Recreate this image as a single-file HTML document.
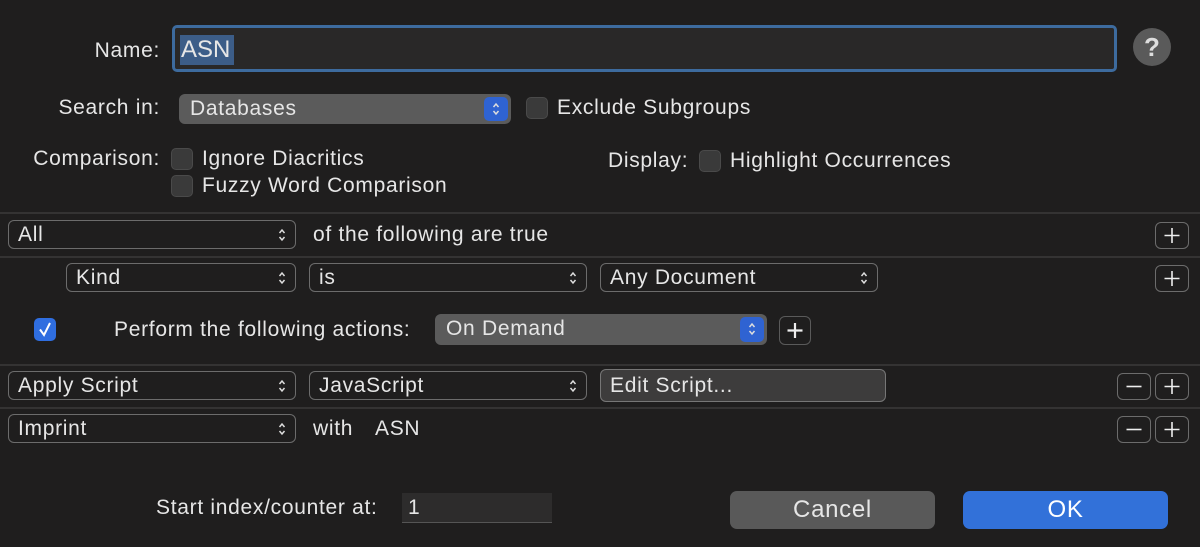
<!DOCTYPE html>
<html><head><meta charset="utf-8"><style>
body{margin:0;width:1200px;height:547px;background:#1f1e1e;font-family:"Liberation Sans",sans-serif;color:#e6e6e6;font-size:21px;letter-spacing:0.7px;overflow:hidden;position:relative}
.a{position:absolute}
.t{position:absolute;line-height:24px;white-space:nowrap}
.r{text-align:right}
.sep{position:absolute;left:0;width:1200px;height:2px;background:#343333}
.pop{position:absolute;box-sizing:border-box;border:1.5px solid #6c6c6c;border-radius:6px}
.pop span{position:absolute;left:9px;top:2px;line-height:24px}
.arr{position:absolute;right:9px;top:6px;width:8px;height:16px}
.sp{position:absolute;box-sizing:border-box;background:#5b5b5b;border-radius:6px}
.sp span{position:absolute;left:11px;top:3px;line-height:24px}
.st{position:absolute;right:3px;top:3px;width:24px;background:#2f63d2;border-radius:5px}
.cb{position:absolute;width:22px;height:22px;box-sizing:border-box;background:#3a3a3a;border:1px solid #4a4a4a;border-radius:5px}
.btn{position:absolute;box-sizing:border-box;border:1.5px solid #6c6c6c;border-radius:6px;width:34px;height:27px}
</style></head><body>
<svg width="0" height="0" style="position:absolute"><defs>
<symbol id="ar" viewBox="0 0 8 16"><path d="M1.5 6 L4 3 L6.5 6 M1.5 10 L4 13 L6.5 10" stroke="#ddd" stroke-width="1.5" fill="none"/></symbol>
<symbol id="pl" viewBox="0 0 34 27"><path d="M17 6 V21 M9.5 13.5 H24.5" stroke="#eee" stroke-width="1.6" fill="none"/></symbol>
<symbol id="mi" viewBox="0 0 34 27"><path d="M9.5 13.5 H24.5" stroke="#eee" stroke-width="1.6" fill="none"/></symbol>
</defs></svg>

<div class="t r" style="right:1040px;top:39px">Name:</div>
<div class="a" style="left:172px;top:25px;width:945px;height:47px;box-sizing:border-box;border:3px solid #3d6b9e;border-radius:5px;background:#292828"></div>
<div class="a" style="left:180px;top:35px;width:54px;height:30px;background:#3c5d88"></div>
<div class="t" style="left:181px;top:38px;font-size:24px;letter-spacing:0">ASN</div>
<div class="a" style="left:1133px;top:28px;width:38px;height:38px;border-radius:50%;background:#5a5a5a;color:#ddd;font-size:26px;font-weight:bold;text-align:center;line-height:38px;letter-spacing:0">?</div>

<div class="t r" style="right:1040px;top:96px">Search in:</div>
<div class="sp" style="left:179px;top:94px;width:332px;height:30px"><span>Databases</span><div class="st" style="height:24px"><svg width="24" height="24" style="position:absolute;left:0;top:0"><use href="#ar" x="8" y="4" width="8" height="16"/></svg></div></div>
<div class="cb" style="left:526px;top:97px"></div>
<div class="t" style="left:557px;top:96px">Exclude Subgroups</div>

<div class="t r" style="right:1040px;top:147px">Comparison:</div>
<div class="cb" style="left:171px;top:148px"></div>
<div class="t" style="left:202px;top:147px">Ignore Diacritics</div>
<div class="cb" style="left:171px;top:175px"></div>
<div class="t" style="left:202px;top:174px">Fuzzy Word Comparison</div>
<div class="t" style="left:608px;top:149px">Display:</div>
<div class="cb" style="left:699px;top:150px"></div>
<div class="t" style="left:730px;top:149px">Highlight Occurrences</div>

<div class="sep" style="top:212px"></div>
<div class="pop" style="left:8px;top:220px;width:288px;height:29px"><span>All</span><svg class="arr"><use href="#ar"/></svg></div>
<div class="t" style="left:313px;top:223px">of the following are true</div>
<div class="btn" style="left:1155px;top:222px"><svg width="34" height="27" style="position:absolute;left:-1.5px;top:-1.5px"><use href="#pl"/></svg></div>

<div class="sep" style="top:256px"></div>
<div class="pop" style="left:66px;top:263px;width:230px;height:29px"><span>Kind</span><svg class="arr"><use href="#ar"/></svg></div>
<div class="pop" style="left:309px;top:263px;width:278px;height:29px"><span>is</span><svg class="arr"><use href="#ar"/></svg></div>
<div class="pop" style="left:600px;top:263px;width:278px;height:29px"><span>Any Document</span><svg class="arr"><use href="#ar"/></svg></div>
<div class="btn" style="left:1155px;top:265px"><svg width="34" height="27" style="position:absolute;left:-1.5px;top:-1.5px"><use href="#pl"/></svg></div>

<div class="a" style="left:34px;top:318px;width:22px;height:23px;background:#2f6ee0;border-radius:5px"><svg width="22" height="23"><path d="M6 11.5 L10 17 L16 5" stroke="#fff" stroke-width="2" fill="none"/></svg></div>
<div class="t" style="left:114px;top:318px">Perform the following actions:</div>
<div class="sp" style="left:435px;top:314px;width:332px;height:31px"><span>On Demand</span><div class="st" style="height:25px"><svg width="24" height="25" style="position:absolute;left:0;top:0"><use href="#ar" x="8" y="4" width="8" height="16"/></svg></div></div>
<div class="btn" style="left:779px;top:316px;width:32px;height:29px;border-color:#5a5a5a"><svg width="34" height="27" style="position:absolute;left:-2px;top:0"><path d="M17 6 V21 M9.5 13.5 H24.5" stroke="#eee" stroke-width="2.2" fill="none"/></svg></div>

<div class="sep" style="top:364px"></div>
<div class="pop" style="left:8px;top:371px;width:288px;height:29px"><span>Apply Script</span><svg class="arr"><use href="#ar"/></svg></div>
<div class="pop" style="left:309px;top:371px;width:278px;height:29px"><span>JavaScript</span><svg class="arr"><use href="#ar"/></svg></div>
<div class="a" style="left:600px;top:369px;width:286px;height:33px;box-sizing:border-box;background:#3d3c3c;border:1.5px solid #767676;border-radius:6px"><span style="position:absolute;left:9px;top:4px;line-height:24px">Edit Script...</span></div>
<div class="btn" style="left:1117px;top:373px"><svg width="34" height="27" style="position:absolute;left:-1.5px;top:-1.5px"><use href="#mi"/></svg></div>
<div class="btn" style="left:1155px;top:373px"><svg width="34" height="27" style="position:absolute;left:-1.5px;top:-1.5px"><use href="#pl"/></svg></div>

<div class="sep" style="top:407px"></div>
<div class="pop" style="left:8px;top:414px;width:288px;height:29px"><span>Imprint</span><svg class="arr"><use href="#ar"/></svg></div>
<div class="t" style="left:313px;top:417px">with</div>
<div class="t" style="left:375px;top:417px">ASN</div>
<div class="btn" style="left:1117px;top:416px"><svg width="34" height="27" style="position:absolute;left:-1.5px;top:-1.5px"><use href="#mi"/></svg></div>
<div class="btn" style="left:1155px;top:416px"><svg width="34" height="27" style="position:absolute;left:-1.5px;top:-1.5px"><use href="#pl"/></svg></div>

<div class="t" style="left:156px;top:496px">Start index/counter at:</div>
<div class="a" style="left:402px;top:493px;width:150px;height:29px;background:#2d2c2c;border-bottom:1px solid #555"></div>
<div class="t" style="left:408px;top:496px">1</div>
<div class="a" style="left:730px;top:491px;width:205px;height:38px;background:#595959;border-radius:7px;text-align:center;line-height:38px;font-size:24px">Cancel</div>
<div class="a" style="left:963px;top:491px;width:205px;height:38px;background:#3271d9;border-radius:7px;text-align:center;line-height:38px;font-size:24px;color:#fff">OK</div>
</body></html>
